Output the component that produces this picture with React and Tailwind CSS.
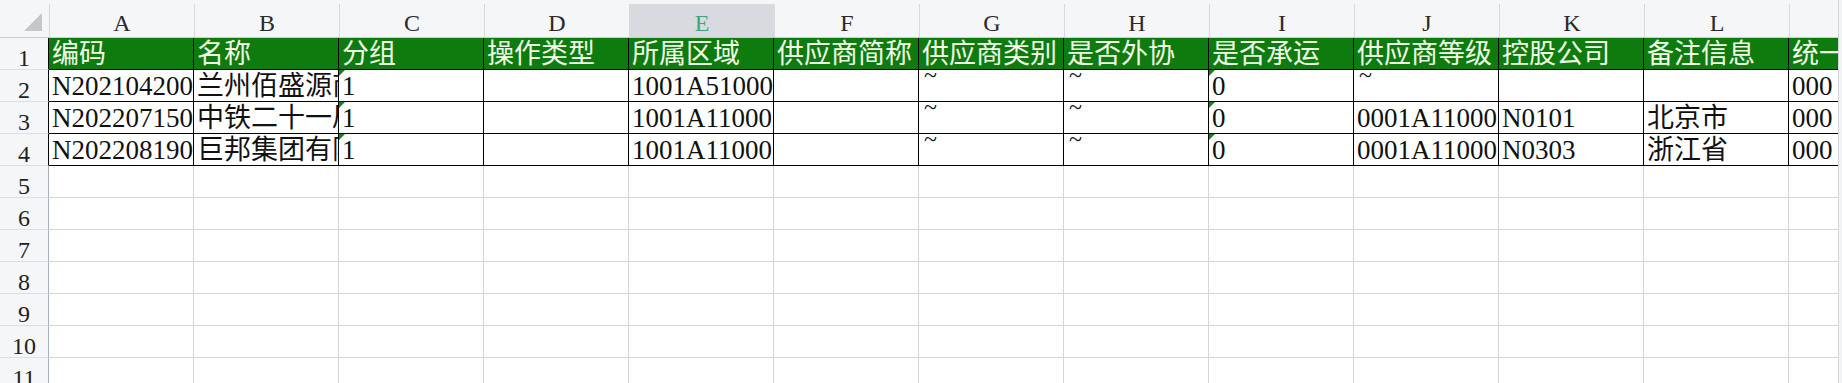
import React from 'react'

const COLS = ['A', 'B', 'C', 'D', 'E', 'F', 'G', 'H', 'I', 'J', 'K', 'L', 'M']

const HEADERS = [
  '编码', '名称', '分组', '操作类型', '所属区域', '供应商简称', '供应商类别',
  '是否外协', '是否承运', '供应商等级', '控股公司', '备注信息', '统一社会信用代码',
]

const ROWS = [
  ['N202104200', '兰州佰盛源商贸有限公司', '1', '', '1001A51000', '', '~', '~', '0', '~', '', '', '000'],
  ['N202207150', '中铁二十一局集团有限公司', '1', '', '1001A11000', '', '~', '~', '0', '0001A11000', 'N0101', '北京市', '000'],
  ['N202208190', '巨邦集团有限公司', '1', '', '1001A11000', '', '~', '~', '0', '0001A11000', 'N0303', '浙江省', '000'],
]

// columns that show the green "number stored as text" marker
const FLAGGED = [2, 8]

function RowHead({ n, dark }) {
  return (
    <div
      className={`w-[49px] h-[32px] shrink-0 flex items-end justify-center bg-[#f5f6f8] border-b border-b-[#dcdfe4] border-r ${
        dark ? 'border-r-black' : 'border-r-[#a9b0bf]'
      } text-[24px] leading-[22px] text-[#222]`}
    >
      {n}
    </div>
  )
}

function DataCell({ value, flagged }) {
  const tilde = value === '~'
  return (
    <div className="relative w-[145px] h-[32px] shrink-0 overflow-hidden whitespace-nowrap border-r border-b border-black bg-white pl-[3px] text-[#111]">
      {flagged && (
        <span className="absolute left-0 top-0 w-0 h-0 border-t-[6px] border-r-[6px] border-t-[#1f7d1f] border-r-transparent" />
      )}
      {tilde ? (
        <div className="pl-[2px] text-[24px] leading-[10px]">~</div>
      ) : (
        <div className="text-[27px] leading-[32px]">{value}</div>
      )}
    </div>
  )
}

export default function App() {
  return (
    <div className="w-[1842px] h-[383px] overflow-hidden flex bg-white font-['Liberation_Serif','Noto_Sans_CJK_SC',serif]">
      <div className="w-[1838px] shrink-0 overflow-hidden">
        {/* Column letters */}
        <div className="flex h-[38px] bg-[#f5f6f8] border-b border-[#c9cdd4]">
          <div className="w-[49px] shrink-0 relative">
            <span className="absolute left-[24px] top-[13px] w-0 h-0 border-b-[18px] border-l-[18px] border-b-[#c4c6ca] border-l-transparent" />
          </div>
          {COLS.map(c => (
            <div key={c} className="w-[145px] shrink-0 pt-[4px]">
              <div
                className={`h-[33px] pt-[7px] text-center text-[24px] leading-[25px] border-l ${
                  c === 'E' ? 'bg-[#d8dadf] text-[#3ea67b] border-l-[#d8dadf]' : 'text-[#2a2a2a] border-l-[#d6d9de]'
                }`}
              >
                {c}
              </div>
            </div>
          ))}
        </div>

        {/* Row 1: green header */}
        <div className="flex">
          <RowHead n={1} dark />
          {HEADERS.map(h => (
            <div
              key={h}
              className="w-[145px] h-[32px] shrink-0 overflow-hidden whitespace-nowrap border-r border-b border-black bg-[#0e7b0e] pl-[3px] text-[27px] leading-[32px] text-[#f1fbe6]"
            >
              {h}
            </div>
          ))}
        </div>

        {/* Data rows */}
        {ROWS.map((row, i) => (
          <div key={i} className="flex">
            <RowHead n={i + 2} dark />
            {row.map((v, j) => (
              <DataCell key={j} value={v} flagged={FLAGGED.includes(j)} />
            ))}
          </div>
        ))}

        {/* Empty rows */}
        {[5, 6, 7, 8, 9, 10, 11].map(n => (
          <div key={n} className="flex">
            <RowHead n={n} />
            {COLS.map(c => (
              <div key={c} className="w-[145px] h-[32px] shrink-0 border-r border-b border-[#d3d6dc]" />
            ))}
          </div>
        ))}
      </div>
      <div className="w-[4px] shrink-0 bg-[#f2f3f5] border-l border-[#d3d6dc]" />
    </div>
  )
}
